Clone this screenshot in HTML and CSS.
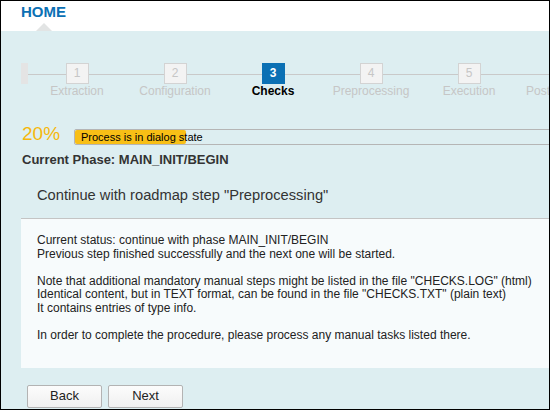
FILE: index.html
```html
<!DOCTYPE html>
<html lang="en">
<head>
  <meta charset="UTF-8">
  <title>HOME</title>
  <link rel="stylesheet" href="styles.css">
</head>
<body>
  <div class="frame">
    <header class="top">
      <div class="tab">
        <span class="tab-title">HOME</span>
        <span class="tab-arrow"></span>
      </div>
    </header>

    <main class="content">
      <div class="roadmap">
        <div class="road-start"></div>
        <div class="step"><span class="step-box">1</span><span class="step-label">Extraction</span></div>
        <div class="step"><span class="step-box">2</span><span class="step-label">Configuration</span></div>
        <div class="step active"><span class="step-box">3</span><span class="step-label">Checks</span></div>
        <div class="step"><span class="step-box">4</span><span class="step-label">Preprocessing</span></div>
        <div class="step"><span class="step-box">5</span><span class="step-label">Execution</span></div>
        <div class="step"><span class="step-box">6</span><span class="step-label">Postprocessing</span></div>
      </div>

      <div class="progress">
        <span class="percent">20%</span>
        <div class="bar">
          <div class="bar-fill"></div>
          <span class="bar-text">Process is in dialog state</span>
        </div>
      </div>

      <h3 class="phase">Current Phase: MAIN_INIT/BEGIN</h3>

      <p class="next-step">Continue with roadmap step "Preprocessing"</p>

      <div class="panel">
        <p>Current status: continue with phase MAIN_INIT/BEGIN<br>
        Previous step finished successfully and the next one will be started.</p>
        <p>Note that additional mandatory manual steps might be listed in the file "CHECKS.LOG" (html)<br>
        Identical content, but in TEXT format, can be found in the file "CHECKS.TXT" (plain text)<br>
        It contains entries of type info.</p>
        <p>In order to complete the procedure, please process any manual tasks listed there.</p>
      </div>

      <div class="buttons">
        <button type="button">Back</button>
        <button type="button">Next</button>
      </div>
    </main>
  </div>
</body>
</html>
```

FILE: styles.css
```css
body {
  margin: 0;
  background-color: #ffffff;
  font-family: "Liberation Sans", Arial, sans-serif;
  color: #333;
}

.frame {
  width: 550px;
  height: 410px;
  box-sizing: border-box;
  border: 1px solid #000;
  overflow: hidden;
  display: flex;
  flex-direction: column;
  background-color: #ddeef1;
}

/* header with the HOME tab */
.top {
  background-color: #ffffff;
  padding-left: 20px;
  height: 30px;
  flex-shrink: 0;
}
.tab {
  display: inline-flex;
  flex-direction: column;
  align-items: center;
}
.tab-title {
  color: #0b70b4;
  font-weight: bold;
  font-size: 15px;
  line-height: 22px;
}
.tab-arrow {
  width: 0;
  height: 0;
  border-left: 8px solid transparent;
  border-right: 8px solid transparent;
  border-bottom: 8px solid #e2e4e4;
}

.content {
  flex: 1;
  padding: 32px 0 0 20px;
  overflow: hidden;
}

/* roadmap */
.roadmap {
  display: flex;
  background: linear-gradient(#c9c9c9, #c9c9c9) no-repeat 0 11px / 100% 1px;
  white-space: nowrap;
}
.road-start {
  width: 7px;
  height: 21px;
  background-color: #e4e4e4;
  flex-shrink: 0;
}
.step {
  width: 98px;
  flex-shrink: 0;
  display: flex;
  flex-direction: column;
  align-items: center;
}
.step-box {
  width: 23px;
  height: 21px;
  box-sizing: border-box;
  border: 1px solid #d3d3d3;
  background-color: #f3f3f3;
  color: #c6c6c6;
  font-size: 12px;
  line-height: 19px;
  text-align: center;
}
.step-label {
  font-size: 12px;
  line-height: 14px;
  color: #c6c6c6;
}
.step.active .step-box {
  background-color: #0b70b4;
  border-color: #0b70b4;
  color: #ffffff;
  font-weight: bold;
}
.step.active .step-label {
  color: #000;
  font-weight: bold;
}

/* progress */
.progress {
  display: flex;
  align-items: flex-end;
  height: 22px;
  margin-top: 25px;
}
.percent {
  color: #f5b80c;
  font-size: 19px;
  line-height: 22px;
  width: 52px;
  flex-shrink: 0;
  padding-left: 1px;
}
.bar {
  position: relative;
  width: 560px;
  flex-shrink: 0;
  height: 16px;
  box-sizing: border-box;
  border: 1px solid #b5b5b5;
  border-radius: 2px;
}
.bar-fill {
  width: 111px;
  height: 100%;
  background-color: #f8bf16;
  border-radius: 2px;
}
.bar-text {
  position: absolute;
  left: 6px;
  top: 0;
  font-size: 11px;
  line-height: 14px;
  color: #000;
}

.phase {
  margin: 7px 0 0 1px;
  font-size: 13px;
  line-height: 16px;
  color: #333;
}

.next-step {
  margin: 18px 0 0 16px;
  font-size: 14.7px;
  line-height: 18px;
  color: #333;
}

/* message panel */
.panel {
  margin-top: 14px;
  background-color: #f7fbfc;
  border-top: 1px solid #c4c4c4;
  padding: 15px 0 0 16px;
  height: 150px;
  box-sizing: border-box;
}
.panel p {
  margin: 0 0 13.5px;
  font-size: 12px;
  line-height: 13.5px;
  color: #222;
}

.buttons {
  display: flex;
  gap: 6px;
  margin: 17px 0 0 6px;
}
button {
  width: 75px;
  height: 23px;
  padding: 0 0 2px;
  border: 1px solid #b3b3b3;
  border-radius: 2px;
  background: linear-gradient(#fcfcfc, #f0f0f0);
  font-family: "Liberation Sans", Arial, sans-serif;
  font-size: 13px;
  color: #222;
  cursor: pointer;
}
```
